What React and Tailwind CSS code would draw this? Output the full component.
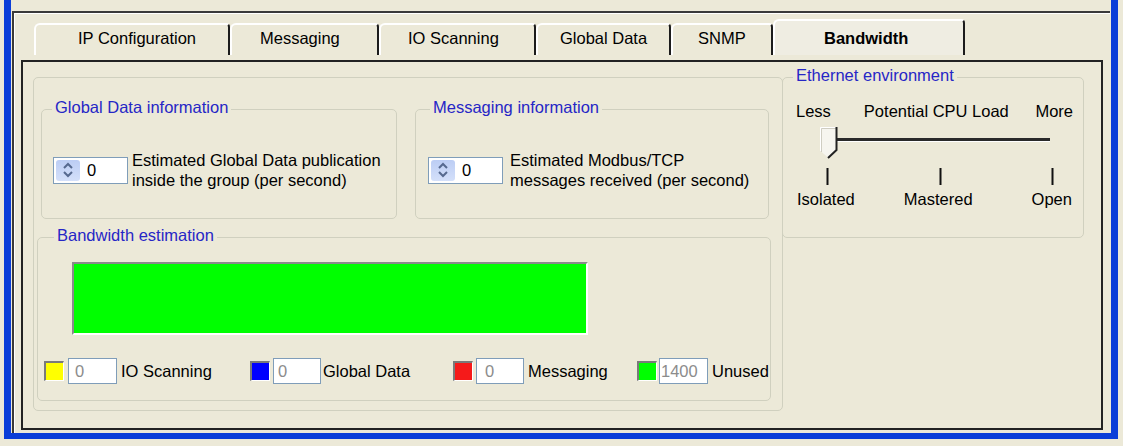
import React from "react";

function Tab({ children, className = "", active = false }) {
  return (
    <div
      className={`shrink-0 rounded-tl-[6px] rounded-tr-[4px] border-l-2 border-t-2 border-r-2 border-l-white border-t-white border-r-[#1c1c1c] bg-[#ECE9D8] whitespace-nowrap ${
        active ? "h-[36px] pt-[7px] font-bold bg-[#EFEDE2]" : "h-[32px] pt-[3px]"
      } ${className}`}
    >
      {children}
    </div>
  );
}

function Spin() {
  return (
    <div className="flex h-[27px] w-[75px] shrink-0 items-center border border-[#7F9DB9] bg-white">
      <div className="ml-[2px] flex h-[21px] w-[24px] items-center justify-center rounded-[3px] bg-gradient-to-b from-[#BCCDF4] to-[#D4E0FA]">
        <svg width="12" height="18" viewBox="0 0 12 18">
          <path d="M2 7 L6 3 L10 7" stroke="#56698F" strokeWidth="2" fill="none" />
          <path d="M2 11 L6 15 L10 11" stroke="#56698F" strokeWidth="2" fill="none" />
        </svg>
      </div>
      <span className="ml-[7px]">0</span>
    </div>
  );
}

function LegendItem({ swatch, value, label, className = "", valuePad = "pl-[6px]", inputGap = "ml-[4px]", labelGap = "ml-[4px]", inputW = "w-[49px]" }) {
  return (
    <div className={`flex shrink-0 items-center ${className}`}>
      <div
        className={`h-[20px] w-[20px] border-t-2 border-l-2 border-b border-r border-t-[#7a7a7a] border-l-[#7a7a7a] border-b-white border-r-white ${swatch}`}
      />
      <div
        className={`${inputGap} h-[26px] ${inputW} border border-[#7F9DB9] bg-white leading-[24px] text-[#8c8c8c] ${valuePad}`}
      >
        {value}
      </div>
      <span className={`${labelGap} whitespace-nowrap`}>{label}</span>
    </div>
  );
}

export default function App() {
  return (
    <div className="h-[446px] w-[1123px] overflow-hidden bg-[#ECE9D8] font-['Liberation_Sans',Arial,sans-serif] text-[16.5px] leading-[20px] text-black">
      <div className="ml-[4px] h-[439px] w-[1114px] border-l-[7px] border-r-[7px] border-b-[6px] border-[#0B3ED8] pt-[11px]">
        <div className="ml-[1px] h-[422px] w-[1098px] border-t-2 border-l-2 border-[#3a3a3a] pt-[6px] shadow-[inset_1px_1px_0_#ffffff]">
          {/* Tabs */}
          <div className="flex h-[36px] items-end pl-[20px]">
            <Tab className="w-[196px] pl-[42px]">IP Configuration</Tab>
            <Tab className="w-[149px] pl-[28px]">Messaging</Tab>
            <Tab className="w-[157px] pl-[27px]">IO Scanning</Tab>
            <Tab className="w-[135px] pl-[22px]">Global Data</Tab>
            <Tab className="w-[102px] pl-[25px]">SNMP</Tab>
            <Tab active className="w-[192px] pl-[49px]">Bandwidth</Tab>
          </div>

          {/* Panel */}
          <div className="ml-[7px] mt-[5px] h-[370px] w-[1082px] border-2 border-[#222222]">
            <div className="flex items-start">
              {/* Big group */}
              <div className="ml-[10px] mt-[15px] h-[334px] w-[750px] shrink-0 rounded-[5px] border border-[#D0D0BF]">
                <div className="ml-[7px] mt-[19px] flex gap-[18px]">
                  <fieldset className="h-[122px] w-[356px] shrink-0 rounded-[5px] border border-[#D0D0BF]">
                    <legend className="ml-[10px] px-[3px] pb-[5px] text-[#2626C6]">Global Data information</legend>
                    <div className="mt-[28px] flex h-[40px] items-center pl-[11px]">
                      <Spin />
                      <div className="ml-[4px] whitespace-nowrap">
                        Estimated Global Data publication
                        <br />
                        inside the group (per second)
                      </div>
                    </div>
                  </fieldset>
                  <fieldset className="h-[122px] w-[354px] shrink-0 rounded-[5px] border border-[#D0D0BF]">
                    <legend className="ml-[14px] px-[3px] pb-[5px] text-[#2626C6]">Messaging information</legend>
                    <div className="mt-[28px] flex h-[40px] items-center pl-[12px]">
                      <Spin />
                      <div className="ml-[7px] whitespace-nowrap">
                        Estimated Modbus/TCP
                        <br />
                        messages received (per second)
                      </div>
                    </div>
                  </fieldset>
                </div>

                <fieldset className="ml-[3px] mt-[6px] h-[176px] w-[734px] rounded-[5px] border border-[#D0D0BF]">
                  <legend className="ml-[16px] px-[3px] pb-[5px] text-[#2626C6]">Bandwidth estimation</legend>
                  <div className="ml-[34px] mt-[12px] h-[73px] w-[516px] border-t-2 border-l-2 border-b-2 border-r-2 border-t-[#8a8a8a] border-l-[#8a8a8a] border-b-white border-r-white bg-[#00FF00]" />
                  <div className="ml-[6px] mt-[23px] flex h-[26px] items-center">
                    <LegendItem className="w-[206px]" swatch="bg-[#FFFF00]" value="0" label="IO Scanning" />
                    <LegendItem className="w-[203px]" swatch="bg-[#0000FF]" value="0" label="Global Data" valuePad="pl-[4px]" inputGap="ml-[3px]" labelGap="ml-[2px]" inputW="w-[48px]" />
                    <LegendItem className="w-[184px]" swatch="bg-[#F51A1A]" value="0" label="Messaging" valuePad="pl-[8px]" inputGap="ml-[3px]" inputW="w-[48px]" />
                    <LegendItem swatch="bg-[#00FF00]" value="1400" label="Unused" valuePad="pl-[1px]" inputGap="ml-[2px]" />
                  </div>
                </fieldset>
              </div>

              {/* Ethernet environment */}
              <fieldset className="-ml-[1px] mt-[3px] h-[173px] w-[302px] shrink-0 rounded-[5px] border border-[#D0D0BF]">
                <legend className="ml-[10px] px-[3px] pb-[5px] text-[#2626C6]">Ethernet environment</legend>
                <div className="mt-[11px] flex pl-[13px] pr-[10px] whitespace-nowrap">
                  <span>Less</span>
                  <span className="ml-[33px]">Potential CPU Load</span>
                  <span className="ml-auto">More</span>
                </div>
                <svg width="300" height="68" viewBox="0 0 300 68" className="block">
                  <rect x="53" y="17" width="214" height="3" fill="#2a2a2a" />
                  <rect x="53" y="20" width="214" height="1" fill="#ffffff" />
                  <path d="M37.5 6.5 H53.5 V29 L45 36.5 L37.5 30 Z" fill="#F6F5EF" />
                  <path d="M37.5 30 V6.5 H53" stroke="#ffffff" strokeWidth="1" fill="none" />
                  <path d="M37.5 30 V6.5 H53" stroke="#cfcdc2" strokeWidth="1" fill="none" transform="translate(1 1)" />
                  <path d="M53.5 6 V29 L45 37" stroke="#222222" strokeWidth="2" fill="none" />
                  <rect x="43.5" y="47" width="2" height="17" fill="#111111" />
                  <rect x="156.5" y="47" width="2" height="17" fill="#111111" />
                  <rect x="268.5" y="47" width="2" height="17" fill="#111111" />
                </svg>
                <div className="flex pl-[14px] whitespace-nowrap">
                  <span>Isolated</span>
                  <span className="ml-[49px]">Mastered</span>
                  <span className="ml-[59px]">Open</span>
                </div>
              </fieldset>
            </div>
          </div>
        </div>
      </div>
    </div>
  );
}
